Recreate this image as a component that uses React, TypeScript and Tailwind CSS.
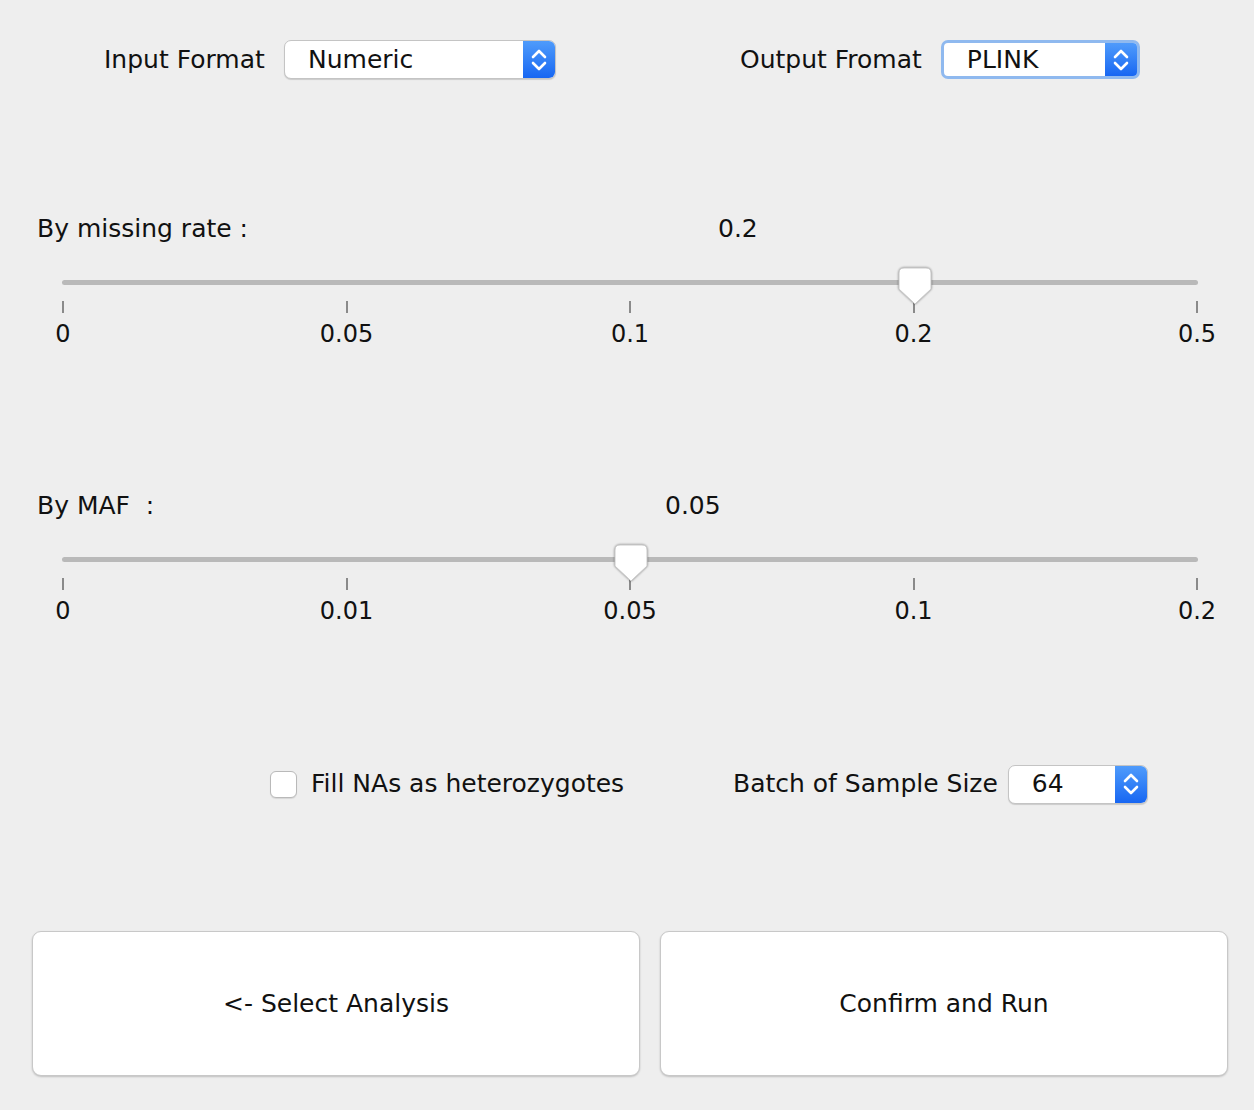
import type { ReactNode } from 'react'

const font = { fontFamily: '"DejaVu Sans", "Liberation Sans", sans-serif' }

function Chevrons() {
  return (
    <svg width="18" height="28" viewBox="0 0 18 28" fill="none" stroke="white" strokeWidth="2.6" strokeLinecap="round" strokeLinejoin="round">
      <path d="M3 11 L9 5 L15 11" />
      <path d="M3 17 L9 23 L15 17" />
    </svg>
  )
}

function Select({ value, width, focused }: { value: string; width: string; focused?: boolean }) {
  return (
    <div
      className={`${width} h-[39px] flex rounded-[7px] bg-white overflow-hidden ${
        focused ? 'border-[3px] border-[#8fb9ef]' : 'border border-[#c4c4c4] shadow-[0_1px_1px_rgba(0,0,0,0.15)]'
      }`}
    >
      <div className="flex-1 flex items-center pl-[23px] text-[25px] text-[#111]">{value}</div>
      <div className="w-[32px] flex items-center justify-center bg-gradient-to-b from-[#4f9bfb] to-[#1766f2]">
        <Chevrons />
      </div>
    </div>
  )
}

function Thumb() {
  return (
    <svg width="34" height="39" viewBox="0 0 34 39" className="drop-shadow-[0_0_1px_rgba(0,0,0,0.45)]">
      <path d="M6 1 H28 Q33 1 33 6 V22 L17 37 L1 22 V6 Q1 1 6 1 Z" fill="white" stroke="#c9c9c9" strokeWidth="1" />
    </svg>
  )
}

function Slider({ labels, pos }: { labels: string[]; pos: number }) {
  return (
    <div className="ml-[62px] w-[1136px]">
      <div className="relative h-[20px]">
        <div className="absolute left-0 right-0 top-[10px] h-[5px] rounded-full bg-[#b9b9b9]" />
        <div className="absolute top-[-3px]" style={{ left: pos * 284 - 16 }}>
          <Thumb />
        </div>
      </div>
      <div className="flex justify-between mt-[11px]">
        {labels.map((l) => (
          <div key={l} className="w-[2px] h-[12px] bg-[#8a8a8a]" />
        ))}
      </div>
      <div className="flex justify-between mt-[6px]">
        {labels.map((l) => (
          <div key={l} className="w-[2px] flex justify-center">
            <span className="text-[24px] leading-[30px] text-[#111] whitespace-nowrap">{l}</span>
          </div>
        ))}
      </div>
    </div>
  )
}

function Button({ width, children }: { width: string; children: ReactNode }) {
  return (
    <div
      className={`${width} h-[145px] flex items-center justify-center bg-white rounded-[9px] border border-[#c8c8c8] shadow-[0_1px_2px_rgba(0,0,0,0.2)] text-[25px] text-[#111]`}
    >
      {children}
    </div>
  )
}

export default function App() {
  return (
    <div className="w-[1254px] h-[1110px] bg-[#eeeeee] flex flex-col" style={font}>
      <div className="flex items-center mt-[40px] h-[39px]">
        <div className="w-[636px] flex items-center ml-[104px]">
          <span className="text-[25px] text-[#111]">Input Format</span>
          <div className="ml-auto mr-[184px]">
            <Select value="Numeric" width="w-[272px]" />
          </div>
        </div>
        <span className="text-[25px] text-[#111]">Output Fromat</span>
        <div className="ml-[19px]">
          <Select value="PLINK" width="w-[199px]" focused />
        </div>
      </div>

      <div className="flex items-center mt-[134px] h-[32px] text-[25px] text-[#111]">
        <span className="ml-[37px] w-[681px]">By missing rate :</span>
        <span>0.2</span>
      </div>
      <div className="mt-[25px]">
        <Slider labels={['0', '0.05', '0.1', '0.2', '0.5']} pos={3} />
      </div>

      <div className="flex items-center mt-[141px] h-[32px] text-[25px] text-[#111]">
        <span className="ml-[37px] w-[628px] whitespace-pre">By MAF  :</span>
        <span>0.05</span>
      </div>
      <div className="mt-[25px]">
        <Slider labels={['0', '0.01', '0.05', '0.1', '0.2']} pos={2} />
      </div>

      <div className="flex items-center mt-[138px] h-[40px] text-[25px] text-[#111]">
        <div className="ml-[270px] w-[27px] h-[27px] rounded-[6px] bg-white border border-[#b9b9b9] shadow-[0_1px_1px_rgba(0,0,0,0.1)]" />
        <span className="ml-[14px] w-[422px]">Fill NAs as heterozygotes</span>
        <span>Batch of Sample Size</span>
        <div className="ml-[10px]">
          <Select value="64" width="w-[140px]" />
        </div>
      </div>

      <div className="flex mt-[127px] ml-[32px] gap-[20px]">
        <Button width="w-[608px]">&lt;- Select Analysis</Button>
        <Button width="w-[568px]">Confirm and Run</Button>
      </div>
    </div>
  )
}
